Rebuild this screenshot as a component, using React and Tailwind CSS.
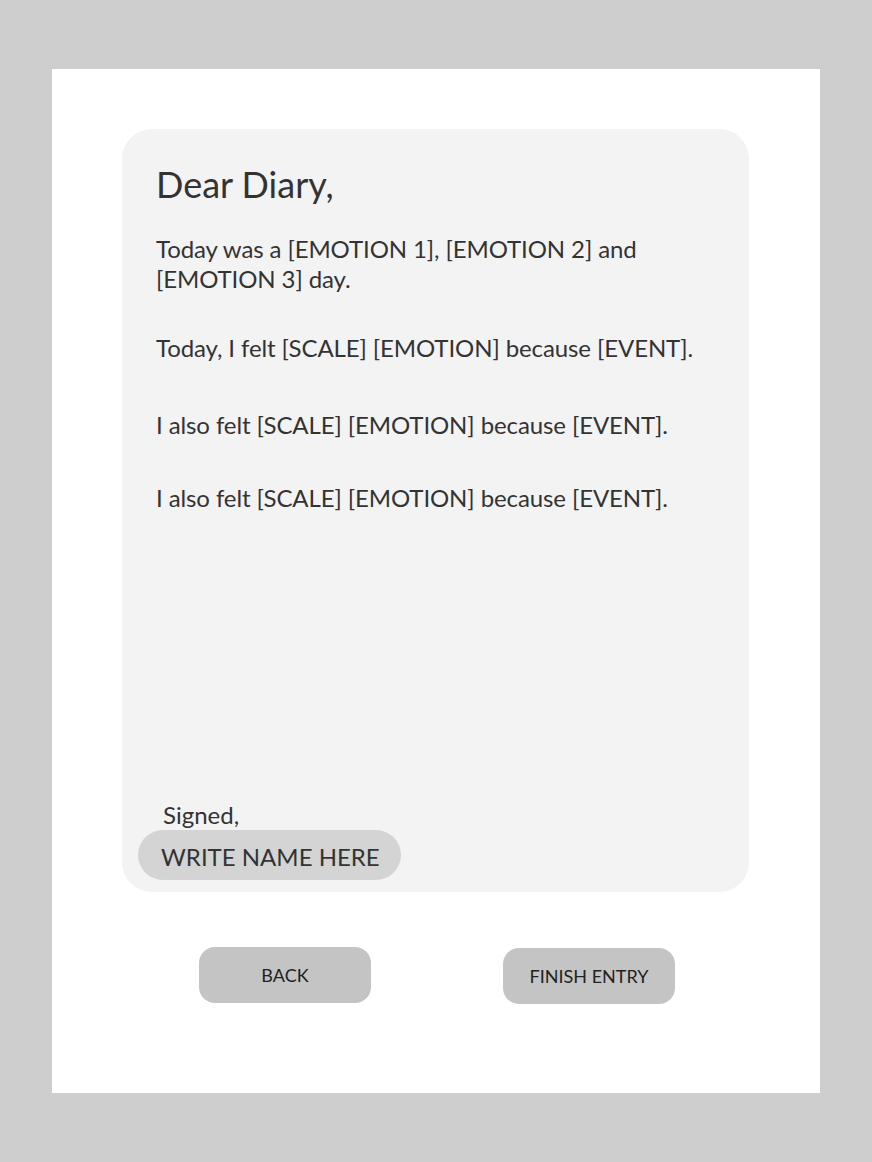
import React from 'react';

const lines = [
  'Today, I felt [SCALE] [EMOTION] because [EVENT].',
  'I also felt [SCALE] [EMOTION] because [EVENT].',
  'I also felt [SCALE] [EMOTION] because [EVENT].',
];

export default function App() {
  return (
    <div className="min-h-[1162px] w-full bg-[#cecece] pt-[69px] font-['Lato','Open_Sans',sans-serif] text-[#333333]">
      <div className="mx-[52px] h-[1024px] bg-white pt-[60px]">
        {/* diary card */}
        <div className="ml-[70px] flex h-[763px] w-[627px] flex-col rounded-[30px] bg-[#f3f3f3] pb-[12px] pl-[34px] pt-[32px]">
          <h1 className="text-[36px] leading-[46px]">Dear Diary,</h1>
          <p className="mt-[27px] w-[500px] text-[24px] leading-[30px] tracking-[-0.1px]">
            Today was a [EMOTION 1], [EMOTION 2] and [EMOTION 3] day.
          </p>
          <p className="mt-[39px] text-[24px] leading-[30px] tracking-[-0.1px]">{lines[0]}</p>
          <p className="mt-[47px] text-[24px] leading-[30px] tracking-[-0.1px]">{lines[1]}</p>
          <p className="mt-[43px] text-[24px] leading-[30px] tracking-[-0.1px]">{lines[2]}</p>

          <div className="mt-auto">
            <div className="ml-[7px] text-[24px] leading-[30px]">Signed,</div>
            <div className="-ml-[18px] flex h-[50px] w-[263px] items-center rounded-full bg-[#d4d4d4] pl-[23px] pt-[3px] text-[24px]">
              WRITE NAME HERE
            </div>
          </div>
        </div>

        <div className="mt-[55px] flex justify-center gap-[132px] pl-[2px]">
          <button className="flex h-[56px] w-[172px] items-center justify-center rounded-[16px] bg-[#c4c4c4] text-[18px] text-[#222222]">
            BACK
          </button>
          <button className="mt-px flex h-[56px] w-[172px] items-center justify-center rounded-[16px] bg-[#c4c4c4] text-[18px] text-[#222222]">
            FINISH ENTRY
          </button>
        </div>
      </div>
    </div>
  );
}
